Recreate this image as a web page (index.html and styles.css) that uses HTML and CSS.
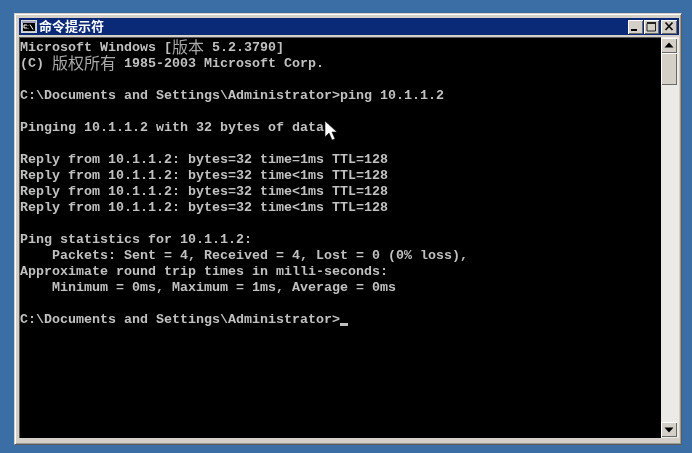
FILE: index.html
```html
<!DOCTYPE html>
<html lang="zh">
<head>
<meta charset="utf-8">
<title>命令提示符</title>
<link rel="stylesheet" href="styles.css">
</head>
<body>
<div class="window">
  <div class="titlebar">
    <svg class="app-icon" width="16" height="13" viewBox="0 0 16 13">
      <rect x="0.5" y="0.5" width="15" height="12" fill="#c8c8c8" stroke="#d8d8d8"/>
      <rect x="1" y="1" width="14" height="2" fill="#9aa0b8"/>
      <rect x="2" y="3" width="12" height="8" fill="#000"/>
      <path d="M3 5h3M3 5v3M3 8h3M7 5v.6M7 8v.6M9 4.5l3 5" stroke="#fff" stroke-width="1" fill="none"/>
    </svg>
    <span class="title">命令提示符</span>
    <div class="controls">
      <div class="btn">
        <svg width="14" height="13" viewBox="0 0 14 13"><rect x="3" y="9" width="6" height="2" fill="#000"/></svg>
      </div>
      <div class="btn">
        <svg width="14" height="13" viewBox="0 0 14 13"><path d="M3 3.5h8.5v7.5h-8.5z" fill="none" stroke="#222"/><rect x="3" y="2" width="9" height="2" fill="#222"/></svg>
      </div>
      <div class="btn btn-close">
        <svg width="16" height="13" viewBox="0 0 16 13"><path d="M4.5 2.5l7 7.5M11.5 2.5l-7 7.5" stroke="#111" stroke-width="1.8" fill="none"/></svg>
      </div>
    </div>
  </div>
  <div class="body">
    <pre class="console">Microsoft Windows [<span class="cjk">版本</span> 5.2.3790]
(C) <span class="cjk">版权所有</span> 1985-2003 Microsoft Corp.

C:\Documents and Settings\Administrator&gt;ping 10.1.1.2

Pinging 10.1.1.2 with 32 bytes of data:

Reply from 10.1.1.2: bytes=32 time=1ms TTL=128
Reply from 10.1.1.2: bytes=32 time&lt;1ms TTL=128
Reply from 10.1.1.2: bytes=32 time&lt;1ms TTL=128
Reply from 10.1.1.2: bytes=32 time&lt;1ms TTL=128

Ping statistics for 10.1.1.2:
    Packets: Sent = 4, Received = 4, Lost = 0 (0% loss),
Approximate round trip times in milli-seconds:
    Minimum = 0ms, Maximum = 1ms, Average = 0ms

C:\Documents and Settings\Administrator&gt;<span class="caret"></span></pre>
    <svg class="pointer" width="13" height="21" viewBox="0 0 13 21">
      <path d="M1 1v16l4-4 3 7 3-1-3-7h5z" fill="#fff" stroke="#111" stroke-width="0.6"/>
    </svg>
    <div class="scrollbar">
      <div class="sb-btn"><svg width="16" height="15" viewBox="0 0 16 15"><path d="M8 4.5l4.5 5h-9z" fill="#000"/></svg></div>
      <div class="sb-thumb"></div>
      <div class="sb-track"></div>
      <div class="sb-btn"><svg width="16" height="15" viewBox="0 0 16 15"><path d="M3.5 5.5h9l-4.5 5z" fill="#000"/></svg></div>
    </div>
  </div>
</div>
</body>
</html>
```
FILE: styles.css
```css
html, body {
  margin: 0;
  height: 100%;
}
body {
  background: #3a6ea5;
  box-sizing: border-box;
  padding: 13px 10px 8px 14px;
  overflow: hidden;
}
.window {
  height: 100%;
  box-sizing: border-box;
  background: #d4d0c8;
  border: 1px solid;
  border-color: #d4d0c8 #5a5a5a #5a5a5a #d4d0c8;
  box-shadow: inset 1px 1px 0 #fff, inset -1px -1px 0 #9a9a96;
  padding: 4px 2px 6px 4px;
  display: flex;
  flex-direction: column;
  filter: blur(0.5px);
}
.titlebar {
  height: 17px;
  flex: none;
  background: #0a2a78;
  display: flex;
  align-items: center;
  padding: 0 2px;
  gap: 2px;
}
.app-icon {
  flex: none;
}
.title {
  color: #fff;
  font: bold 13px/15px "Noto Sans CJK SC", sans-serif;
  padding-bottom: 2px;
}
.controls {
  margin-left: auto;
  display: flex;
}
.btn {
  width: 15px;
  height: 14px;
  box-sizing: border-box;
  background: #d4d0c8;
  box-shadow: inset 1px 1px 0 #fff, inset -1px -1px 0 #6a6a66;
  margin-left: 1px;
  display: flex;
}
.btn-close {
  width: 16px;
  margin-left: 2px;
}
.body {
  flex: 1;
  min-height: 0;
  margin-top: 2px;
  position: relative;
  display: flex;
  background: #000;
  box-shadow: inset 1px 1px 0 #555;
}
.console {
  flex: 1;
  margin: 0;
  padding: 3px 0 0 1px;
  color: #c0c0c0;
  font: bold 13.33px/16px "Liberation Mono", monospace;
  overflow: hidden;
}
.cjk {
  font: 400 16px/0 "Noto Sans CJK SC", sans-serif;
  color: #a8a8a8;
  vertical-align: -1.5px;
}
.caret {
  display: inline-block;
  width: 8px;
  height: 3px;
  background: #c0c0c0;
  vertical-align: -3px;
}
.pointer {
  position: absolute;
  left: 305px;
  top: 83px;
}
.scrollbar {
  width: 18px;
  flex: none;
  background: #eceae6;
  display: flex;
  flex-direction: column;
  padding: 1px 0 1px 0;
  box-sizing: border-box;
}
.sb-btn, .sb-thumb {
  flex: none;
  width: 16px;
  background: #d4d0c8;
  box-shadow: inset 1px 1px 0 #fff, inset -1px -1px 0 #6a6a66;
}
.sb-btn {
  height: 15px;
  display: flex;
  justify-content: center;
}
.sb-thumb {
  height: 32px;
}
.sb-track {
  flex: 1;
}
```
